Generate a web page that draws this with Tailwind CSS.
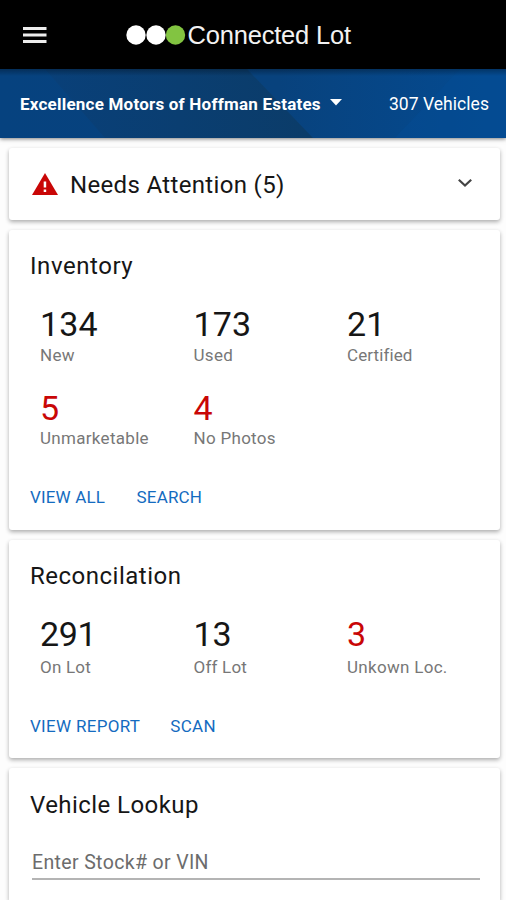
<!DOCTYPE html>
<html lang="en">
<head>
<meta charset="utf-8">
<title>Connected Lot</title>
<script src="https://cdn.jsdelivr.net/npm/@tailwindcss/browser@4"></script>
</head>
<body class="h-[900px] overflow-hidden bg-[#fdfdfd] font-[Roboto,sans-serif] text-[#161616]">
<header class="flex h-[69px] items-center bg-black pl-[23px]">
  <svg class="h-4 w-6 shrink-0" viewBox="0 0 24 16" fill="#ededed"><path d="M0 0h23.500v3H0zM0 6.500h23.500v3H0zM0 13h23.500v3H0z"/></svg>
  <svg class="ml-[79px] h-5 w-[60px] shrink-0" viewBox="0 0 60 20"><circle cx="10" cy="10" r="9.700" fill="#fff"/><circle cx="30" cy="10" r="9.700" fill="#fff"/><circle cx="49.500" cy="10" r="9.700" fill="#82c441"/></svg>
  <h1 class="ml-[1.500px] whitespace-nowrap font-['Liberation_Sans',sans-serif] text-[25.500px] leading-8 tracking-[-0.2px] text-[#f2f2f2]">Connected Lot</h1>
</header>
<section class="relative z-10 flex h-[69px] items-center justify-between bg-[#073f7a] pt-px pr-[17px] pl-5 text-white shadow-[0_1px_4px_rgba(0,0,0,0.5)]">
  <svg class="absolute inset-0 -z-10 h-full w-full" viewBox="0 0 506 69" preserveAspectRatio="none">
    <defs>
      <linearGradient id="base"><stop offset="0" stop-color="#06427f"/><stop offset=".55" stop-color="#08427d"/><stop offset="1" stop-color="#044b92"/></linearGradient>
      <linearGradient id="dark"><stop offset="0" stop-color="#094079"/><stop offset="1" stop-color="#0b3c69"/></linearGradient>
      <linearGradient id="shade" x2="0" y2="1"><stop offset="0" stop-opacity=".3"/><stop offset="1" stop-opacity="0"/></linearGradient>
    </defs>
    <path fill="url(#base)" d="M0 0h506v69H0z"/>
    <path fill="url(#dark)" d="M45 0h202l66 69H105z"/>
    <path fill="#034b94" fill-opacity=".5" d="M460 0h46v69H395z"/>
    <path fill="url(#shade)" d="M0 0h506v7H0z"/>
  </svg>
  <div class="flex items-center">
    <span class="pt-px whitespace-nowrap text-[17px] font-bold tracking-[0.22px]">Excellence Motors of Hoffman Estates</span>
    <svg class="mb-1 ml-[9px] h-[7px] w-3" viewBox="0 0 12 7" fill="#fff"><path d="M0 0h12L6 6.500z"/></svg>
  </div>
  <span class="whitespace-nowrap text-[17.500px] tracking-[0.050px]">307 Vehicles</span>
</section>
<main class="flex flex-col gap-[10px] pt-[10px] pr-[6px] pl-[9px]">
  <section class="flex h-[72px] items-center rounded-[3px] bg-white pt-[2px] pr-[28px] pl-[23px] shadow-[0_2px_4px_rgba(0,0,0,0.32)]">
    <svg class="mb-[2px] h-[22px] w-[26px]" viewBox="0 0 26 22"><path fill="#c90606" d="M13 0 26 22H0z"/><path fill="#fff" d="M11.700 8.500h2.500v6h-2.500zM11.700 16.500h2.500v2.500h-2.500z"/></svg>
    <h2 class="ml-3 grow text-2xl tracking-[0.34px]">Needs Attention (5)</h2>
    <svg class="mb-1 h-2 w-[14px]" viewBox="0 0 14 8" fill="none" stroke="#444" stroke-width="2.200"><path d="M.8.800 7 6.500 13.200.800"/></svg>
  </section>
  <section class="h-[300px] rounded-[3px] bg-white pl-[21px] shadow-[0_2px_4px_rgba(0,0,0,0.32)]">
    <h2 class="pt-5 text-2xl tracking-[0.55px]">Inventory</h2>
    <div class="mt-[22px] ml-[10px] grid grid-cols-[153.500px_153.500px_1fr] gap-y-[19px]">
      <div><p class="text-[34px] leading-10 tracking-[0.2px]">134</p><p class="-mt-[3px] text-[17px] leading-7 tracking-[0.3px] text-[#777]">New</p></div>
      <div><p class="text-[34px] leading-10 tracking-[0.2px]">173</p><p class="-mt-[3px] text-[17px] leading-7 tracking-[0.3px] text-[#777]">Used</p></div>
      <div><p class="text-[34px] leading-10 tracking-[0.2px]">21</p><p class="-mt-[3px] text-[17px] leading-7 tracking-[0.1px] text-[#777]">Certified</p></div>
      <div><p class="text-[34px] leading-10 text-[#c90606]">5</p><p class="-mt-[4px] text-[17px] leading-7 tracking-[0.3px] text-[#777]">Unmarketable</p></div>
      <div><p class="text-[34px] leading-10 text-[#c90606]">4</p><p class="-mt-[4px] text-[17px] leading-7 tracking-[0.3px] text-[#777]">No Photos</p></div>
    </div>
    <div class="mt-[33px] flex gap-[31.500px] text-[17px] leading-6 tracking-[0.16px] text-[#146bc0]"><a>VIEW ALL</a><a>SEARCH</a></div>
  </section>
  <section class="h-[218px] rounded-[3px] bg-white pl-[21px] shadow-[0_2px_4px_rgba(0,0,0,0.32)]">
    <h2 class="pt-5 text-2xl tracking-[0.5px]">Reconcilation</h2>
    <div class="mt-[22px] ml-[10px] grid grid-cols-[153.500px_153.500px_1fr]">
      <div><p class="text-[34px] leading-10 tracking-[-0.3px]">291</p><p class="-mt-px text-[17px] leading-7 tracking-[0.2px] text-[#777]">On Lot</p></div>
      <div><p class="text-[34px] leading-10">13</p><p class="-mt-px text-[17px] leading-7 tracking-[0.2px] text-[#777]">Off Lot</p></div>
      <div><p class="text-[34px] leading-10 text-[#c90606]">3</p><p class="-mt-px text-[17px] leading-7 tracking-[0.3px] text-[#777]">Unkown Loc.</p></div>
    </div>
    <div class="mt-[33px] flex gap-[30px] text-[17px] leading-6 tracking-[0.3px] text-[#146bc0]"><a>VIEW REPORT</a><a>SCAN</a></div>
  </section>
  <section class="h-[132px] rounded-t-[3px] bg-white pr-5 pl-[21px] shadow-[0_2px_4px_rgba(0,0,0,0.32)]">
    <h2 class="pt-[21px] text-2xl tracking-[0.43px]">Vehicle Lookup</h2>
    <div class="mt-[26px] ml-[2px] h-[33px] border-b-2 border-[#b4b4b4] text-[19.500px] leading-8 tracking-[0.36px] text-[#6c6c6c]">Enter Stock# or VIN</div>
  </section>
</main>
</body>
</html>
